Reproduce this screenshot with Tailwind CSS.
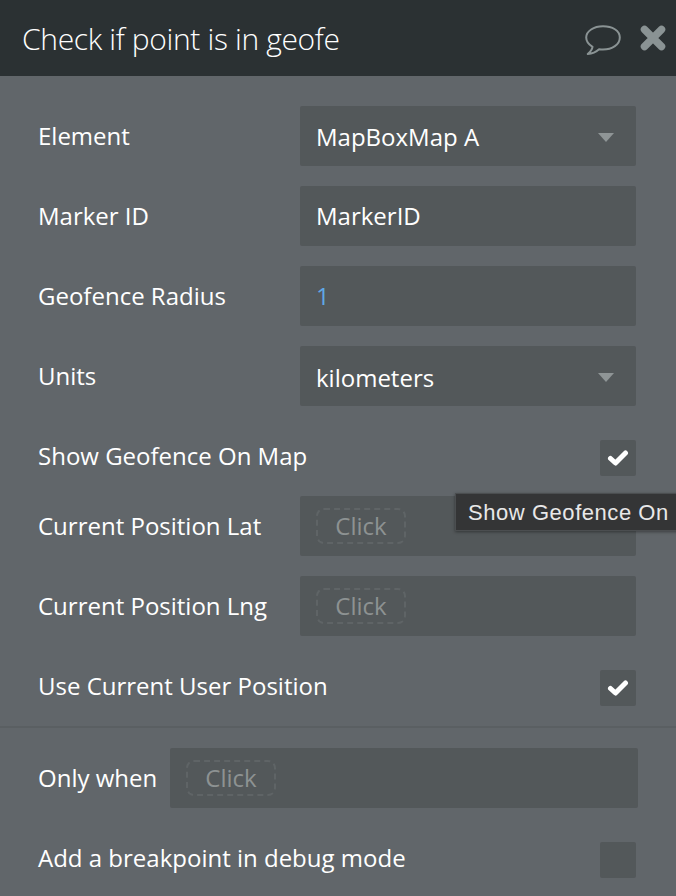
<!DOCTYPE html>
<html lang="en">
<head>
  <meta charset="UTF-8">
  <title>Check if point is in geofence</title>
  <script src="https://cdn.jsdelivr.net/npm/@tailwindcss/browser@4"></script>
</head>
<body class="bg-[#61666a] text-white antialiased font-['Open_Sans',sans-serif] w-[676px] h-[896px] overflow-hidden relative">

  <!-- Header -->
  <header class="h-[76px] bg-[#2b3133] flex items-center justify-between pl-[22px] pr-[10px]">
    <h1 class="text-[30px] leading-none font-light tracking-[-0.35px] text-white pt-[1px]">Check if point is in geofe</h1>
    <div class="flex items-center gap-[19px]">
      <svg class="w-[36px] h-[30px] mt-[3px]" viewBox="0 0 36 30" fill="none" stroke="#8a9394" stroke-width="2" stroke-linejoin="round"><path d="M18 1.200C8.700 1.200 1.200 6.200 1.200 12.500c0 4 2.500 7 6.300 9.300 -0.300 2.500 -2.200 5 -4.700 7.200 3.800 -0.300 8 -1.800 11.300 -4.800 1.300 0.200 2.600 0.300 3.900 0.300 9.300 0 16.800 -5 16.800 -12S27.300 1.200 18 1.200z"/></svg>
      <svg class="w-[26px] h-[26px]" viewBox="0 0 26 26" fill="none" stroke="#8a9394" stroke-width="7.500" stroke-linecap="round"><path d="M4.500 4.500l17 17M21.500 4.500l-17 17"/></svg>
    </div>
  </header>

  <!-- Fields -->
  <main class="pt-[30px] pl-[38px] pr-[40px] flex flex-col">
    <div class="h-[60px] flex items-center justify-between">
      <span class="text-[24px] leading-none">Element</span>
      <div class="w-[336px] h-[60px] bg-[#53585a] rounded-[2px] flex items-center justify-between pl-[16px] pr-[22px] pt-[2px] text-[24px]">
        <span>MapBoxMap A</span>
        <span class="w-0 h-0 border-x-[8px] border-x-transparent border-t-[9px] border-t-[#8f9596]"></span>
      </div>
    </div>
    <div class="h-[60px] mt-[20px] flex items-center justify-between">
      <span class="text-[24px] leading-none">Marker ID</span>
      <div class="w-[336px] h-[60px] bg-[#53585a] rounded-[2px] flex items-center pl-[16px] text-[24px]">MarkerID</div>
    </div>
    <div class="h-[60px] mt-[20px] flex items-center justify-between">
      <span class="text-[24px] leading-none">Geofence Radius</span>
      <div class="w-[336px] h-[60px] bg-[#53585a] rounded-[2px] flex items-center pl-[16px] text-[24px] text-[#5fa8e6]">1</div>
    </div>
    <div class="h-[60px] mt-[20px] flex items-center justify-between">
      <span class="text-[24px] leading-none">Units</span>
      <div class="w-[336px] h-[60px] bg-[#53585a] rounded-[2px] flex items-center justify-between pl-[16px] pr-[22px] pt-[3px] text-[24px]">
        <span>kilometers</span>
        <span class="w-0 h-0 border-x-[8px] border-x-transparent border-t-[9px] border-t-[#8f9596]"></span>
      </div>
    </div>
    <div class="h-[36px] mt-[34px] flex items-center justify-between">
      <span class="text-[24px] leading-none pb-[5px]">Show Geofence On Map</span>
      <div class="w-[36px] h-[36px] bg-[#53585a] rounded-[2px] flex items-center justify-center">
        <svg class="w-[22px] h-[18px]" viewBox="0 0 22 18" fill="none" stroke="#fff" stroke-width="5" stroke-linecap="round" stroke-linejoin="round"><path d="M3.500 9.500l5 4.500 10 -10"/></svg>
      </div>
    </div>
    <div class="h-[60px] mt-[20px] flex items-center justify-between">
      <span class="text-[24px] leading-none">Current Position Lat</span>
      <div class="w-[336px] h-[60px] bg-[#53585a] rounded-[2px] flex items-center pl-[16px]">
        <span class="h-[36px] w-[90px] border-2 border-dashed border-[#5f6466] rounded-[8px] flex items-center justify-center text-[24px] text-[#8d9292]">Click</span>
      </div>
    </div>
    <div class="h-[60px] mt-[20px] flex items-center justify-between">
      <span class="text-[24px] leading-none">Current Position Lng</span>
      <div class="w-[336px] h-[60px] bg-[#53585a] rounded-[2px] flex items-center pl-[16px]">
        <span class="h-[36px] w-[90px] border-2 border-dashed border-[#5f6466] rounded-[8px] flex items-center justify-center text-[24px] text-[#8d9292]">Click</span>
      </div>
    </div>
    <div class="h-[36px] mt-[34px] flex items-center justify-between">
      <span class="text-[24px] leading-none pb-[5px]">Use Current User Position</span>
      <div class="w-[36px] h-[36px] bg-[#53585a] rounded-[2px] flex items-center justify-center">
        <svg class="w-[22px] h-[18px]" viewBox="0 0 22 18" fill="none" stroke="#fff" stroke-width="5" stroke-linecap="round" stroke-linejoin="round"><path d="M3.500 9.500l5 4.500 10 -10"/></svg>
      </div>
    </div>
  </main>

  <!-- Conditions -->
  <section class="mt-[20px] border-t-2 border-[#5a5f62] pt-[20px] pl-[38px] pr-[38px] flex flex-col">
    <div class="h-[60px] flex items-center justify-between">
      <span class="text-[24px] leading-none">Only when</span>
      <div class="w-[468px] h-[60px] bg-[#53585a] rounded-[2px] flex items-center pl-[16px]">
        <span class="h-[36px] w-[90px] border-2 border-dashed border-[#5f6466] rounded-[8px] flex items-center justify-center text-[24px] text-[#8d9292]">Click</span>
      </div>
    </div>
    <div class="h-[36px] mt-[34px] pr-[2px] flex items-center justify-between">
      <span class="text-[24px] leading-none pb-[5px]">Add a breakpoint in debug mode</span>
      <div class="w-[36px] h-[36px] bg-[#53585a] rounded-[2px]"></div>
    </div>
  </section>

  <!-- Tooltip -->
  <div class="absolute left-[455px] top-[493px] w-[240px] h-[38px] bg-[#343536] border border-[#4b4e50] shadow-[0_1px_3px_rgba(0,0,0,0.4)] flex items-center pl-[12px] pt-[1px] font-['Liberation_Sans',sans-serif] text-[22px] tracking-[0.55px] text-[#e8e8e8] whitespace-nowrap">Show Geofence On</div>
</body>
</html>
